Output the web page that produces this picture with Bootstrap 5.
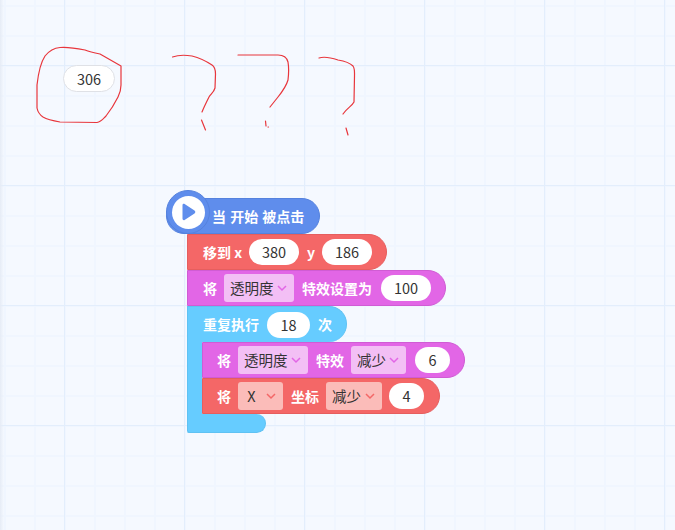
<!DOCTYPE html>
<html lang="en">
<head>
<meta charset="UTF-8">
<meta name="viewport" content="width=device-width, initial-scale=1.0">
<title>Blocks</title>
<link rel="stylesheet" href="https://cdn.jsdelivr.net/npm/bootstrap@5.3.0/dist/css/bootstrap.min.css">
<style>
body { background: #f5f9ff; overflow: hidden; }
.stage {
    position: relative; width: 675px; height: 530px; overflow: hidden;
    font-family: "Noto Sans CJK SC", "Noto Sans", sans-serif; font-size: 14px;
    background-color: #f5f9ff;
    background-image:
        linear-gradient(to right, #e3eefc 1.5px, transparent 1.5px),
        linear-gradient(to bottom, #e3eefc 1.5px, transparent 1.5px),
        linear-gradient(to right, #f0f6ff 2px, transparent 2px),
        linear-gradient(to bottom, #f0f6ff 2px, transparent 2px);
    background-size: 120px 120px, 120px 120px, 30px 30px, 30px 30px;
    background-position: 64px 0, 0 65px, 4px 0, 0 5px;
}
.edge-shade { position: absolute; left: 0; top: 0; width: 4px; height: 530px; background: linear-gradient(to right, #e6ecf6, transparent); }
.scribble { position: absolute; left: 0; top: 0; }
.scribble path { fill: none; stroke: #e8363c; stroke-width: 1.2; stroke-linejoin: round; stroke-linecap: round; }
.float-val { position: absolute; left: 63px; top: 65px; width: 52px; height: 27px; border: 1px solid #dfe1e6; color: #333; font-size: 14.5px; }
.stack { position: absolute; left: 166px; top: 190px; width: 320px; }
.blk { height: 36px; color: #fff; font-weight: 700; border-radius: 0 18px 18px 0; border: 1px solid; white-space: nowrap; }
.hat { height: 36px; width: 154px; padding-left: 45px; word-spacing: 1px; background: #5f8dec; border-color: #5582de; border-radius: 18px; }
.hat-wrap { position: relative; width: 154px; height: 44px; padding-top: 8px; }
.flag { position: absolute; left: 0; top: 0; width: 44px; height: 44px; background: #5f8dec; border: 1px solid #5582de; }
.flag-in { width: 33px; height: 33px; background: #fff; }
.outer { margin-left: 21px; }
.b-move { width: 200px; padding-left: 15px; background: #f46767; border-color: #e65e5e; }
.b-fx { width: 259px; padding-left: 15px; background: #e266e6; border-color: #d05cd4; }
.b-loop { width: 160px; padding-left: 15px; background: #66ccff; border-color: #5fc2f3; border-bottom: 0; }
.arm { width: 15px; background: #66ccff; height: 72px; border-left: 1px solid #5fc2f3; }
.b-fx2 { width: 263px; padding-left: 14px; background: #e266e6; border-color: #d05cd4; }
.b-x { width: 238px; padding-left: 14px; background: #f46767; border-color: #e65e5e; }
.foot { width: 79px; height: 19px; background: #66ccff; border-radius: 0 10px 10px 3px; border: 1px solid #5fc2f3; border-top: 0; }
.pill { height: 26px; background: #fff; color: #333; font-weight: 400; font-size: 14.5px; border-radius: 13px; }
.w50 { width: 50px; } .w43 { width: 43px; } .w35 { width: 35px; }
.pick { height: 28px; border-radius: 3px; color: #333; font-weight: 400; font-size: 14.5px; padding: 0 6px; }
.pick svg { fill: none; stroke-width: 1.5; }
.pick-p { background: #f3bff5; } .pick-p svg { stroke: #e266e6; }
.pick-r { background: #fbbcb9; } .pick-r svg { stroke: #f46767; }
.w70 { width: 70px; } .w55 { width: 55px; } .w56 { width: 56px; } .w45 { width: 45px; }
.row-gap { gap: 7px; }
.gl { margin-left: 1px; }
.gl2 { margin-left: 2px; }
</style>
</head>
<body>
<div class="stage">
    <div class="edge-shade"></div>

    <svg class="scribble" width="675" height="530" viewBox="0 0 675 530">
        <path d="M121 66 L100 54 C95 53 90 52 85 50 C75 48 65 47 60 47.5 C54 48 49 51 45 56 C41 62 38 76 37 85 L37 108 C38 113 40 115 43 117 C48 120 54 121 60 122 L97 122.5 C101 122 103 119 106 116 C110 111 115 103 118 97 C120 93 121 90 121 85 Z" />
        <path d="M172.5 57 C178 55 186 55 192 56 C200 58 206 61 212 65 C215 67 215.500 70 215.500 74 L215 88 C214 92 211 94 209 97 C206 103 204 107 202 112" />
        <path d="M201.500 120 L205.500 130" />
        <path d="M238 55 L278 55 C284 55 287 58 288 62 C289 68 288.500 76 288 80 C286 87 282 92 278 97 L270 107" />
        <path d="M265.500 121 L266 126 M268 127 L268.500 127" />
        <path d="M319 58 C325 56 332 58 338 60 C344 61 350 63 353 66 C355 69 354.500 72 354.500 76 L354 102 C352 106 347 108 343 114" />
        <path d="M346 128 L348 135" />
    </svg>

    <div class="float-val rounded-pill bg-white d-flex align-items-center justify-content-center">306</div>

    <div class="stack">
        <div class="hat-wrap">
            <div class="blk hat d-flex align-items-center">当 开始 被点击</div>
            <div class="flag rounded-circle d-flex align-items-center justify-content-center">
                <div class="flag-in rounded-circle d-flex align-items-center justify-content-center">
                    <svg width="18" height="18" viewBox="0 0 18 18"><path d="M3.500 2.200 C3.500 1 4.700 .5 5.600 1 L15.500 7.600 C16.600 8.300 16.600 9.700 15.500 10.400 L5.600 17 C4.700 17.500 3.500 17 3.500 15.800 Z" fill="#5f8dec"/></svg>
                </div>
            </div>
        </div>

        <div class="outer">
            <div class="blk b-move d-flex align-items-center row-gap">
                <span>移到 x</span><span class="pill w50 d-flex align-items-center justify-content-center">380</span>
                <span class="gl">y</span><span class="pill w50 d-flex align-items-center justify-content-center">186</span>
            </div>
            <div class="blk b-fx d-flex align-items-center row-gap">
                <span>将</span>
                <span class="pick pick-p w70 d-flex align-items-center justify-content-between">透明度<svg width="12" height="8" viewBox="0 0 12 8"><path d="M2 2 L6 6 L10 2"/></svg></span>
                <span class="gl">特效设置为</span>
                <span class="pill w50 gl2 d-flex align-items-center justify-content-center">100</span>
            </div>
            <div class="blk b-loop d-flex align-items-center row-gap">
                <span>重复执行</span><span class="pill w43 gl d-flex align-items-center justify-content-center">18</span><span class="gl">次</span>
            </div>
            <div class="d-flex">
                <div class="arm"></div>
                <div>
                    <div class="blk b-fx2 d-flex align-items-center row-gap">
                        <span>将</span>
                        <span class="pick pick-p w70 d-flex align-items-center justify-content-between">透明度<svg width="12" height="8" viewBox="0 0 12 8"><path d="M2 2 L6 6 L10 2"/></svg></span>
                        <span class="gl">特效</span>
                        <span class="pick pick-p w55 d-flex align-items-center justify-content-between">减少<svg width="12" height="8" viewBox="0 0 12 8"><path d="M2 2 L6 6 L10 2"/></svg></span>
                        <span class="pill w35 gl2 d-flex align-items-center justify-content-center">6</span>
                    </div>
                    <div class="blk b-x d-flex align-items-center row-gap">
                        <span>将</span>
                        <span class="pick pick-r w45 d-flex align-items-center justify-content-between">&nbsp;X<svg width="12" height="8" viewBox="0 0 12 8"><path d="M2 2 L6 6 L10 2"/></svg></span>
                        <span class="gl">坐标</span>
                        <span class="pick pick-r w56 d-flex align-items-center justify-content-between">减少<svg width="12" height="8" viewBox="0 0 12 8"><path d="M2 2 L6 6 L10 2"/></svg></span>
                        <span class="pill w35 d-flex align-items-center justify-content-center">4</span>
                    </div>
                </div>
            </div>
            <div class="foot"></div>
        </div>
    </div>
</div>
<script src="https://cdn.jsdelivr.net/npm/bootstrap@5.3.0/dist/js/bootstrap.bundle.min.js"></script>
</body>
</html>
